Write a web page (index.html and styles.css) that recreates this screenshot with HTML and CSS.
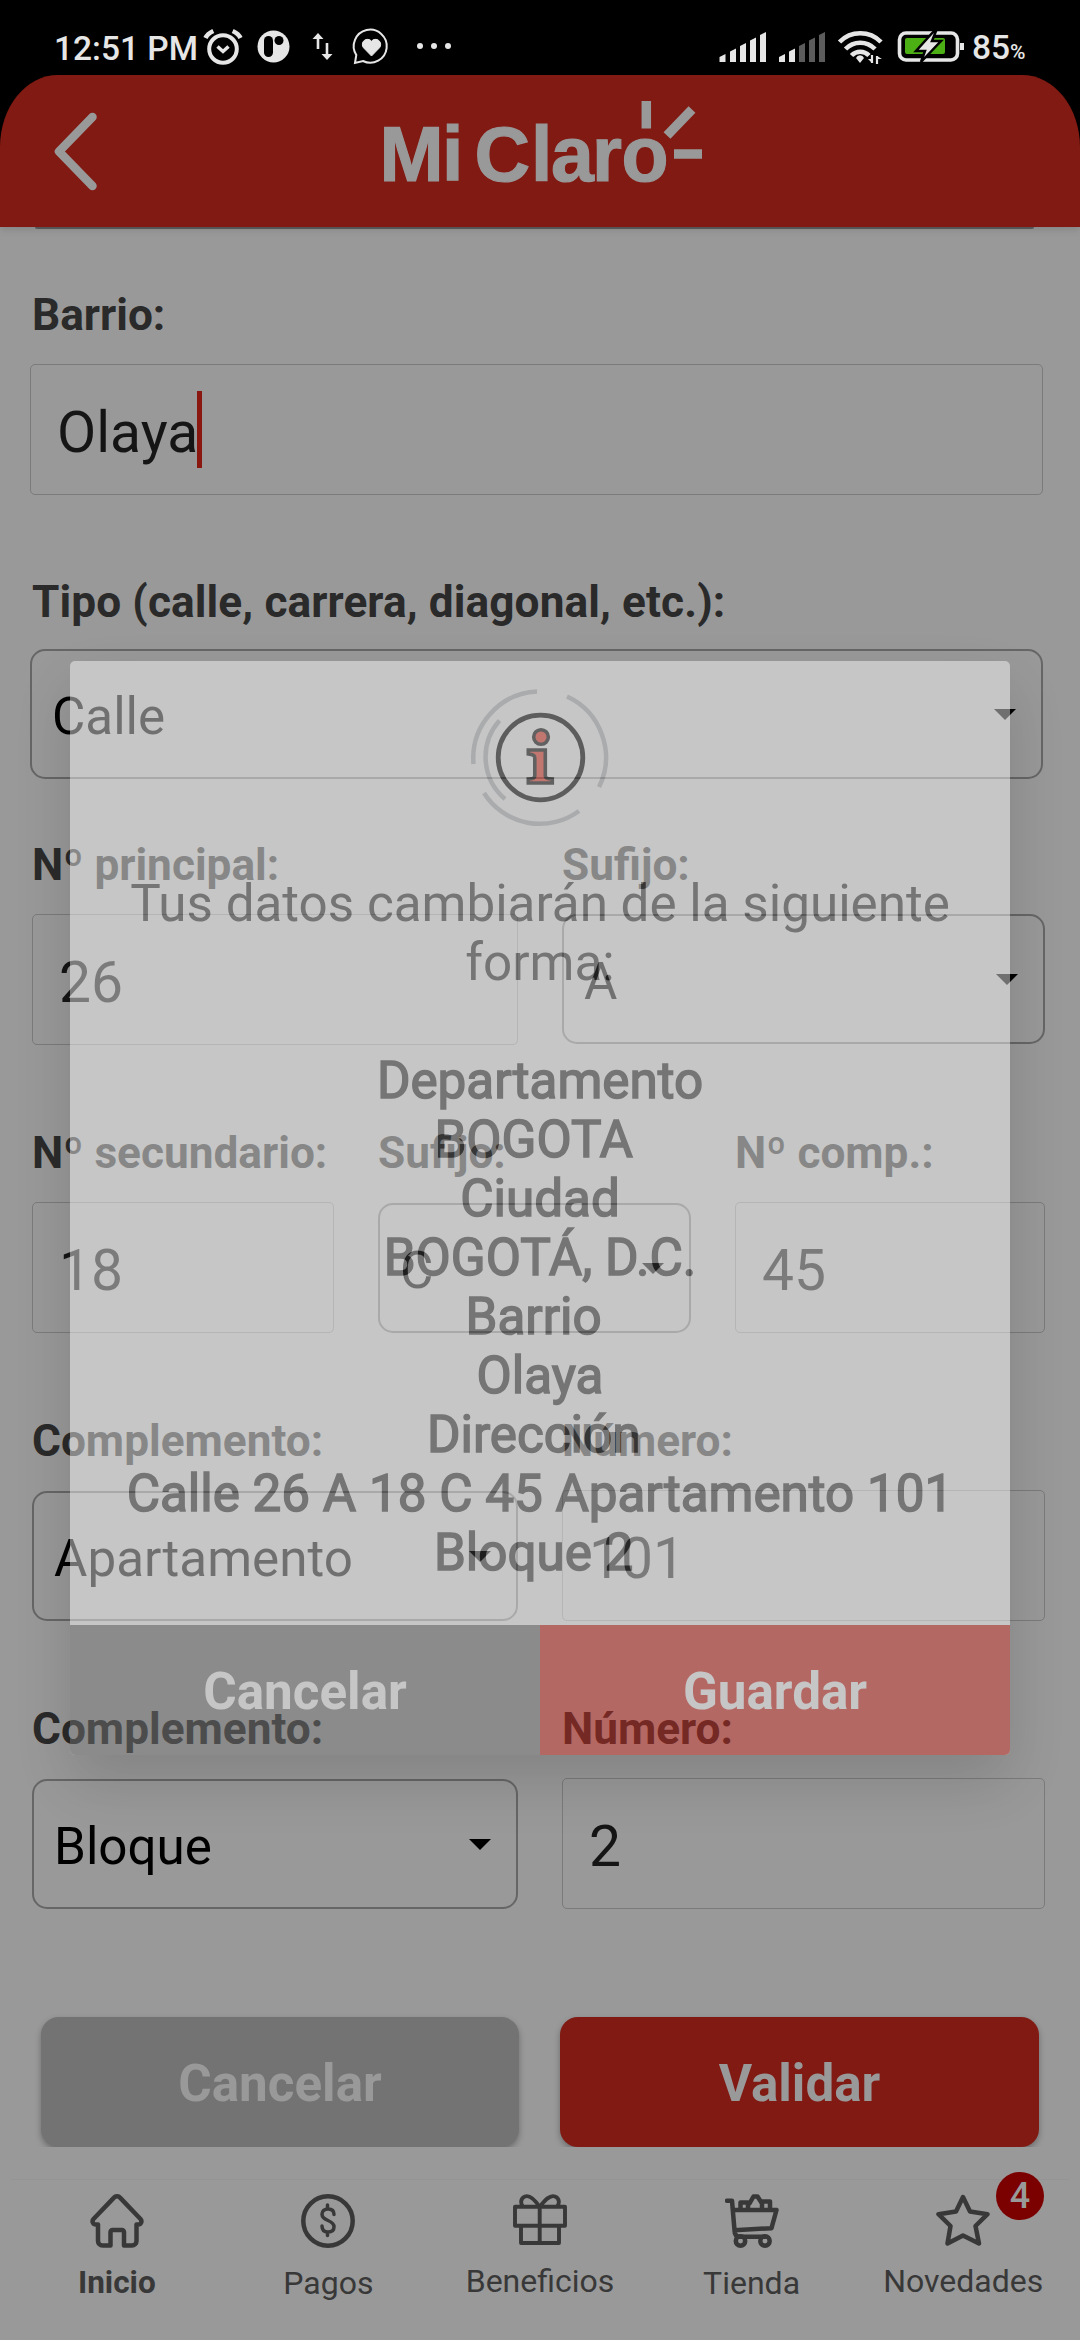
FILE: index.html
```html
<!DOCTYPE html>
<html lang="es">
<head>
<meta charset="utf-8">
<title>Mi Claro</title>
<link rel="stylesheet" href="styles.css">
</head>
<body>
<div class="screen">
  <div class="status">
    <span class="clock">12:51 PM</span>
    <svg class="status-left" width="270" height="75" viewBox="195 0 270 75" fill="none" stroke="#e6e6e6">
      <circle cx="223" cy="49" r="13.8" stroke-width="4"/>
      <path d="M205.500 38c1.500-3.500 4.500-5.500 7.800-7M240.500 38c-1.500-3.500-4.500-5.500-7.800-7" stroke-width="4.500"/>
      <path d="M217.500 46.500l5.500 5 5.500-5" stroke-width="3.500"/>
      <circle cx="273.500" cy="46.500" r="16" fill="#e6e6e6" stroke="none"/>
      <rect x="264" y="36" width="9" height="21" rx="4.500" fill="#000" stroke="none"/>
      <circle cx="279" cy="40.500" r="4.500" fill="#000" stroke="none"/>
      <path d="M318 49V37M327 43v12" stroke-width="2.600"/>
      <path d="M312.500 39l5.500-6 5.500 6zM321.500 54l5.500 6 5.500-6z" fill="#e6e6e6" stroke="none"/>
      <path d="M355 63l1.300-8a16.500 16.500 0 1 1 6.700 6z" stroke-width="2"/>
      <path d="M371.500 56l-8-8.200a5 5 0 0 1 8-6.600 5 5 0 0 1 8 6.600z" fill="#e6e6e6" stroke-width="1"/>
      <g fill="#e6e6e6" stroke="none"><circle cx="420" cy="46" r="3"/><circle cx="434" cy="46" r="3"/><circle cx="448" cy="46" r="3"/></g>
    </svg>
    <svg class="status-right" width="255" height="75" viewBox="715 0 255 75" fill="none" stroke="#e6e6e6">
      <g fill="#e6e6e6" stroke="none">
        <path d="M719.500 57l6-3v8h-6zM730 51.500l6-3V62h-6zM740 46l6-3v19h-6zM750 40.500l6-3V62h-6zM760 35l6-3v30h-6z"/>
        <path d="M779 57l6-3v8h-6zM789 51.500l6-3V62h-6z"/>
        <path fill="#5c5c5c" d="M799 46l6-3v19h-6zM809 40.500l6-3V62h-6zM819 35l6-3v30h-6z"/>
        <path d="M856 58a4.300 4.300 0 0 1 8 0l-4 5z"/>
      </g>
      <path d="M839.500 42a29 29 0 0 1 41.500 0M845.500 49a20.500 20.500 0 0 1 29.500 0M851.500 55.500a12 12 0 0 1 17.500 0" stroke-width="4.600"/>
      <path d="M872 55v8M877 56v8" stroke-width="2.200"/>
      <path d="M868 59h4v4zM877 56l5 3h-5z" fill="#e6e6e6" stroke="none"/>
      <rect x="899.500" y="33" width="58" height="27" rx="6.500" stroke-width="3.600"/>
      <path d="M962 43v7" stroke-width="4"/>
      <rect x="905" y="38" width="40" height="16" rx="2" fill="#4caf14" stroke="none"/>
      <path d="M934 31l-18 20h9l-4 11 20-21h-9l4-10z" fill="#e6e6e6" stroke="#000" stroke-width="2.500"/>
    </svg>
    <span class="battery">85<small>%</small></span>
  </div>

  <header class="header">
    <svg width="1080" height="152" viewBox="0 75 1080 152">
      <path d="M92.500 117L59 151.500l33.500 34.500" fill="none" stroke="#999" stroke-width="8.500" stroke-linecap="round" stroke-linejoin="round"/>
      <text class="logo" y="180.500" x="379.500 442 463 474.500 531 551 592 621.500">Mi Claro</text>
      <path d="M646.300 101v27.500M667 135.500l25-26M674 154h28" fill="none" stroke="#999" stroke-width="9.500"/>
    </svg>
  </header>

  <main class="form">
    <div class="field wide">
      <label>Barrio:</label>
      <div class="input">Olaya<i class="cursor"></i></div>
    </div>
    <div class="field wide tipo">
      <label>Tipo (calle, carrera, diagonal, etc.):</label>
      <div class="select">Calle<svg width="22" height="11" viewBox="0 0 22 11"><path d="M0 0h22L11 11z"/></svg></div>
    </div>
    <div class="row two">
      <div class="field"><label>Nº principal:</label><div class="input">26</div></div>
      <div class="field raised"><label>Sufijo:</label><div class="select">A<svg width="22" height="11" viewBox="0 0 22 11"><path d="M0 0h22L11 11z"/></svg></div></div>
    </div>
    <div class="row three">
      <div class="field"><label>Nº secundario:</label><div class="input">18</div></div>
      <div class="field"><label>Sufijo:</label><div class="select">C<svg width="22" height="11" viewBox="0 0 22 11"><path d="M0 0h22L11 11z"/></svg></div></div>
      <div class="field"><label>Nº comp.:</label><div class="input">45</div></div>
    </div>
    <div class="row two">
      <div class="field"><label>Complemento:</label><div class="select">Apartamento<svg width="22" height="11" viewBox="0 0 22 11"><path d="M0 0h22L11 11z"/></svg></div></div>
      <div class="field"><label>Número:</label><div class="input">101</div></div>
    </div>
    <div class="row two">
      <div class="field"><label>Complemento:</label><div class="select">Bloque<svg width="22" height="11" viewBox="0 0 22 11"><path d="M0 0h22L11 11z"/></svg></div></div>
      <div class="field"><label>Número:</label><div class="input">2</div></div>
    </div>
    <div class="actions">
      <div class="btn">Cancelar</div>
      <div class="btn primary">Validar</div>
    </div>
  </main>

  <nav class="nav">
    <div class="item active">
      <svg width="54" height="54" viewBox="0 0 54 54"><path d="M24 3.600a4 4 0 0 1 6 0L50.500 25c2 2.300.5 5.500-2.500 5.500h-1.500V47a4.500 4.500 0 0 1-4.500 4.500h-8V38a2 2 0 0 0-2-2h-9.500a2 2 0 0 0-2 2v13.500h-8A4.500 4.500 0 0 1 8 47V30.500H6c-3 0-4.500-3.200-2.500-5.500z"/></svg>
      <span>Inicio</span>
    </div>
    <div class="item">
      <svg width="54" height="54" viewBox="0 0 54 54"><circle cx="27" cy="27" r="24.700"/><path d="M33 20.500c0-4-2.500-5.500-6-5.500s-6 2-6 5.300c0 7.200 12 5.200 12 12.400 0 3.500-2.500 5.300-6 5.300s-6-2-6-6M26.500 11v4M26.500 38v3.500" stroke-width="3.500"/></svg>
      <span>Pagos</span>
    </div>
    <div class="item up">
      <svg width="54" height="54" viewBox="0 0 54 54"><path d="M2 12.700h50v19H2zM8 31.700h38V49H8zM26.700 13v36M26.700 13C22 6 17 .5 12 2.500 7 4.500 7.500 10 10 12.500M26.700 13C32 6 37 .5 42 2.500c5 2 4.500 7.500 2 10" stroke-width="3.900"/></svg>
      <span>Beneficios</span>
    </div>
    <div class="item">
      <svg width="54" height="54" viewBox="0 0 54 54"><path d="M2 6.700h5l2.500 29.500 37-2L51.500 16H8M9.500 36.500c0 4 2 6.200 5.500 6.200h25M15.500 16V8.500H23V16M24.500 9.500l4-7h4l4.500 7V16M37 7.500h8V16"/><circle cx="15.500" cy="47" r="4.700"/><circle cx="40" cy="47" r="4.700"/></svg>
      <span>Tienda</span>
    </div>
    <div class="item up">
      <svg width="54" height="54" viewBox="0 0 54 54"><path d="M27 3l7 14.500 17.500 2.700L39.500 32 43 49.500 27 41.500l-15.500 8L14.500 32 2.500 20.200 20 17.500z"/></svg>
      <span>Novedades</span>
      <b class="badge">4</b>
    </div>
  </nav>

  <div class="dialog">
    <svg class="info" width="150" height="150" viewBox="465 683 150 150" fill="none">
      <g stroke="#bdc1c6" stroke-width="4.500">
        <path d="M537 691.500A67 67 0 0 0 473.500 764M499.500 720.500A55 55 0 0 0 505 799M567 696.500A67 67 0 0 1 599 787M484 793A66 66 0 0 0 579 811"/>
      </g>
      <circle cx="540.500" cy="757.500" r="42.300" stroke="#111" stroke-width="4.800"/>
      <g fill="#f3493c" stroke="#1b1b1b" stroke-width="3.600">
        <circle cx="541" cy="737" r="7.300"/>
        <path d="M528.300 750h17v26c0 2 2 3 7 3v4h-24v-4c5 0 6.500-1 6.500-3v-18c0-3-2-3.500-6.500-4z"/>
      </g>
    </svg>
    <p>Tus datos cambiarán de la siguiente forma:</p>
    <p class="data">Departamento<br>BOGOTA&nbsp;<br>Ciudad<br>BOGOTÁ, D.C.<br>Barrio&nbsp;<br>Olaya<br>Dirección&nbsp;<br>Calle 26 A 18 C 45 Apartamento 101 Bloque 2&nbsp;</p>
    <div class="dialog-actions"><div>Cancelar</div><div class="save">Guardar</div></div>
  </div>
</div>
</body>
</html>
```
FILE: styles.css
```css
* { box-sizing: border-box; }
body { margin: 0; background: #000; font-family: Roboto, sans-serif; }
svg { display: block; }
.screen {
  position: relative;
  display: flex;
  flex-direction: column;
  width: 1080px;
  height: 2340px;
  overflow: hidden;
}

/* status bar */
.status { display: flex; height: 75px; color: #e6e6e6; font-weight: 500; }
.clock { width: 195px; padding: 29px 0 0 54px; font-size: 33.500px; line-height: 40px; white-space: nowrap; }
.status-right { margin-left: 250px; }
.battery { padding: 28px 0 0 2px; font-size: 33.500px; line-height: 40px; white-space: nowrap; }
.battery small { font-size: 21px; }

/* header */
.header {
  position: relative;
  height: 152px;
  background: #811a13;
  border-radius: 58px 58px 0 0 / 72px 72px 0 0;
  box-shadow: 0 2px 8px rgba(0, 0, 0, .15);
}
.logo {
  font: bold 77px "Liberation Sans", sans-serif;
  fill: #999;
  stroke: #999;
  stroke-width: 1.200px;
}

/* form */
.form {
  height: 1920px;
  padding: 0 32px;
  background: #999;
  overflow: hidden;
}
.form::before {
  content: "";
  display: block;
  height: 2px;
  margin: 0 14px 61px 3px;
  background: #5e5e5e;
  border-radius: 0 0 8px 8px;
}
.field label {
  display: block;
  height: 50px;
  color: #2a2a2a;
  font-size: 44.200px;
  font-weight: 700;
  line-height: 50px;
  white-space: nowrap;
}
.input, .select { display: flex; align-items: center; }
.input {
  height: 131px;
  margin-top: 24px;
  padding: 6px 26px 0;
  border: 1px solid #7b7b7b;
  border-radius: 5px;
  color: #151515;
  font-size: 57px;
}
.select {
  height: 130px;
  margin-top: 25px;
  padding: 4px 25px 0 20px;
  justify-content: space-between;
  border: 2px solid #666;
  border-radius: 15px;
  color: #000;
  font-size: 51.200px;
}
.select svg { margin-top: -4px; }
.wide { height: 205px; margin-bottom: 82px; }
.wide .input, .wide .select { width: 1013px; margin-left: -2px; }
.tipo { margin-bottom: 58px; }
.tipo label { letter-spacing: .1px; }
.tipo .select { margin-top: 22px; }
.raised .select { margin-top: 24px; }
.cursor { width: 5px; height: 77px; margin: -6px 0 0 -1px; background: #8a1610; }
.row { display: grid; column-gap: 44px; height: 205px; margin-bottom: 83px; }
.two { grid-template-columns: 486px 483px; }
.three { grid-template-columns: 302px 313px 310px; }

.actions { display: flex; gap: 41px; margin: 108px 0 0 9px; }
.btn {
  width: 478px;
  height: 130px;
  padding-top: 3px;
  border-radius: 18px;
  background: #737373;
  box-shadow: 0 3px 6px rgba(0, 0, 0, .3);
  color: #999;
  font-size: 51.200px;
  font-weight: 700;
  line-height: 128px;
  text-align: center;
}
.btn.primary { width: 479px; background: #811a13; }

/* bottom navigation */
.nav { display: flex; height: 193px; padding: 32px 11px 0; background: #999; }
.item {
  position: relative;
  display: flex;
  flex: 1;
  flex-direction: column;
  align-items: center;
  padding-top: 14px;
  border-top: 1px solid #949494;
  color: #383838;
  font-size: 32px;
}
.item svg { fill: none; stroke: #383838; stroke-width: 4.500; stroke-linejoin: round; stroke-linecap: round; }
.item span { margin-top: 17px; line-height: 36px; }
.item.up span { margin-top: 15px; }
.active { font-size: 31.500px; font-weight: 700; }
.badge {
  position: absolute;
  top: -8px;
  right: 25px;
  width: 48px;
  height: 48px;
  border-radius: 50%;
  background: #7b0000;
  color: #999;
  font-size: 36px;
  font-weight: 500;
  line-height: 49px;
  text-align: center;
}

/* confirmation dialog, part way through its fade */
.dialog {
  position: absolute;
  top: 661px;
  left: 70px;
  width: 940px;
  height: 1094px;
  border-radius: 5px;
  background: #fff;
  box-shadow: 0 26px 60px rgba(0, 0, 0, .33);
  color: #474747;
  font-size: 51.200px;
  line-height: 59px;
  text-align: center;
  opacity: .44;
}
.info { margin: 22px auto 0; }
.dialog p { margin: 41px 50px 0; }
.dialog p.data { margin-top: 59px; -webkit-text-stroke: 1.500px #474747; }
.dialog-actions {
  display: flex;
  height: 130px;
  margin-top: 43px;
  border-radius: 0 0 5px 5px;
  overflow: hidden;
  color: #fff;
  font-weight: 700;
  line-height: 134px;
}
.dialog-actions div { flex: 1; background: #797979; }
.dialog-actions .save { background: #d62a1e; }
```
